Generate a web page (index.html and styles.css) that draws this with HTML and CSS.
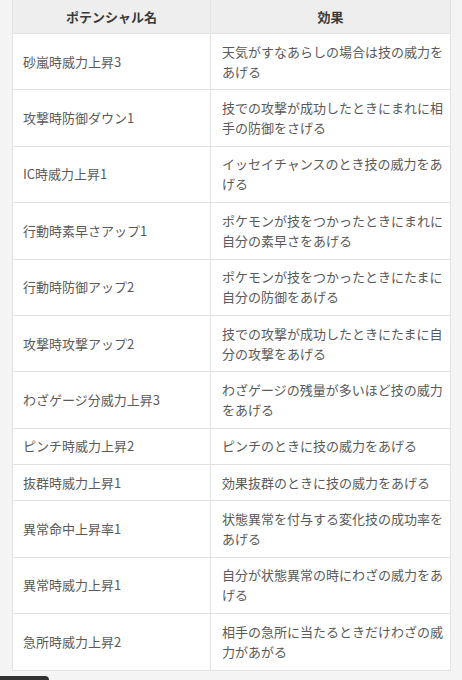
FILE: index.html
```html
<!DOCTYPE html>
<html lang="ja">
<head>
<meta charset="utf-8">
<title>ポテンシャル一覧</title>
<link rel="stylesheet" href="styles.css">
</head>
<body>
<div class="page">
  <table class="potential">
    <thead>
      <tr><th class="name">ポテンシャル名</th><th class="effect">効果</th></tr>
    </thead>
    <tbody>
      <tr><td>砂嵐時威力上昇3</td><td>天気がすなあらしの場合は技の威力をあげる</td></tr>
      <tr><td>攻撃時防御ダウン1</td><td>技での攻撃が成功したときにまれに相手の防御をさげる</td></tr>
      <tr><td>IC時威力上昇1</td><td>イッセイチャンスのとき技の威力をあげる</td></tr>
      <tr><td>行動時素早さアップ1</td><td>ポケモンが技をつかったときにまれに自分の素早さをあげる</td></tr>
      <tr><td>行動時防御アップ2</td><td>ポケモンが技をつかったときにたまに自分の防御をあげる</td></tr>
      <tr><td>攻撃時攻撃アップ2</td><td>技での攻撃が成功したときにたまに自分の攻撃をあげる</td></tr>
      <tr><td>わざゲージ分威力上昇3</td><td>わざゲージの残量が多いほど技の威力をあげる</td></tr>
      <tr><td>ピンチ時威力上昇2</td><td>ピンチのときに技の威力をあげる</td></tr>
      <tr><td>抜群時威力上昇1</td><td>効果抜群のときに技の威力をあげる</td></tr>
      <tr><td>異常命中上昇率1</td><td>状態異常を付与する変化技の成功率をあげる</td></tr>
      <tr><td>異常時威力上昇1</td><td>自分が状態異常の時にわざの威力をあげる</td></tr>
      <tr><td>急所時威力上昇2</td><td>相手の急所に当たるときだけわざの威力があがる</td></tr>
    </tbody>
  </table>
  <div class="tab"></div>
</div>
</body>
</html>
```

FILE: styles.css
```css
html, body {
  margin: 0;
  padding: 0;
}
body {
  background: #f4f4f4;
  font-family: "Noto Sans CJK JP", "Noto Sans", sans-serif;
  width: 462px;
  height: 680px;
  overflow: hidden;
}
.page {
  position: relative;
  height: 680px;
}
.potential {
  margin-left: 12px;
  width: 439px;
  border-collapse: collapse;
  background: #ffffff;
  border: 1px solid #e2e2e2;
  border-top: none;
  table-layout: fixed;
  font-size: 13px;
  line-height: 20px;
  color: #5a5a5a;
}
.potential th {
  background: #eeeeee;
  color: #3a3a3a;
  font-weight: bold;
  height: 33px;
  padding: 0;
  text-align: center;
  border-left: 1px solid #e2e2e2;
  border-bottom: 1px solid #e2e2e2;
}
.potential th.name {
  width: 197px;
}
.potential td {
  padding: 7.7px 8px 7.7px 10px;
  border-left: 1px solid #e2e2e2;
  border-top: 1px solid #e2e2e2;
  vertical-align: middle;
  text-align: left;
  word-break: break-all;
}
.potential td + td {
  padding-left: 11px;
  padding-right: 6px;
}
.tab {
  position: absolute;
  left: 0;
  bottom: 0;
  width: 49px;
  height: 4px;
  background: #333333;
  border-top-right-radius: 4px;
}
```
